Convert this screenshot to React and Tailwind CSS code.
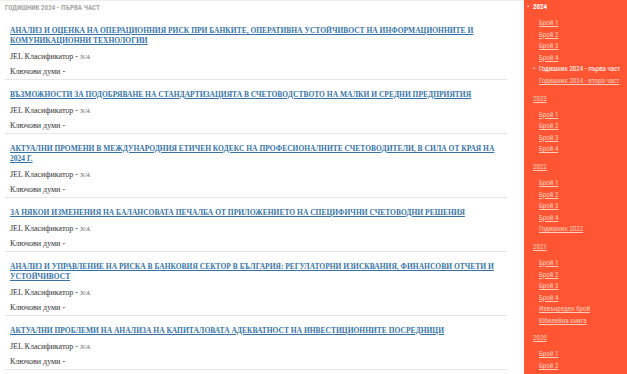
import React from "react";

const articles = [
  "АНАЛИЗ И ОЦЕНКА НА ОПЕРАЦИОННИЯ РИСК ПРИ БАНКИТЕ, ОПЕРАТИВНА УСТОЙЧИВОСТ НА ИНФОРМАЦИОННИТЕ И КОМУНИКАЦИОННИ ТЕХНОЛОГИИ",
  "ВЪЗМОЖНОСТИ ЗА ПОДОБРЯВАНЕ НА СТАНДАРТИЗАЦИЯТА В СЧЕТОВОДСТВОТО НА МАЛКИ И СРЕДНИ ПРЕДПРИЯТИЯ",
  "АКТУАЛНИ ПРОМЕНИ В МЕЖДУНАРОДНИЯ ЕТИЧЕН КОДЕКС НА ПРОФЕСИОНАЛНИТЕ СЧЕТОВОДИТЕЛИ, В СИЛА ОТ КРАЯ НА 2024 Г.",
  "ЗА НЯКОИ ИЗМЕНЕНИЯ НА БАЛАНСОВАТА ПЕЧАЛБА ОТ ПРИЛОЖЕНИЕТО НА СПЕЦИФИЧНИ СЧЕТОВОДНИ РЕШЕНИЯ",
  "АНАЛИЗ И УПРАВЛЕНИЕ НА РИСКА В БАНКОВИЯ СЕКТОР В БЪЛГАРИЯ: РЕГУЛАТОРНИ ИЗИСКВАНИЯ, ФИНАНСОВИ ОТЧЕТИ И УСТОЙЧИВОСТ",
  "АКТУАЛНИ ПРОБЛЕМИ НА АНАЛИЗА НА КАПИТАЛОВАТА АДЕКВАТНОСТ НА ИНВЕСТИЦИОННИТЕ ПОСРЕДНИЦИ",
];

const years = [
  {
    year: "2024",
    active: true,
    items: [
      { t: "Брой 1" },
      { t: "Брой 2" },
      { t: "Брой 3" },
      { t: "Брой 4" },
      { t: "Годишник 2024 - първа част", active: true },
      { t: "Годишник 2024 - втора част" },
    ],
  },
  { year: "2023", items: [{ t: "Брой 1" }, { t: "Брой 2" }, { t: "Брой 3" }, { t: "Брой 4" }] },
  {
    year: "2022",
    items: [{ t: "Брой 1" }, { t: "Брой 2" }, { t: "Брой 3" }, { t: "Брой 4" }, { t: "Годишник 2022" }],
  },
  {
    year: "2021",
    items: [
      { t: "Брой 1" },
      { t: "Брой 2" },
      { t: "Брой 3" },
      { t: "Брой 4" },
      { t: "Извънреден брой" },
      { t: "Юбилейна книга" },
    ],
  },
  { year: "2020", items: [{ t: "Брой 1" }, { t: "Брой 2" }, { t: "Брой 3" }, { t: "Брой 4" }] },
];

export default function App() {
  return (
    <div className="flex h-[374px] w-[627px] overflow-hidden bg-white">
      <main className="w-[524px] shrink-0 pl-[5px] border-t border-[#eeeeee]">
        <div className="pt-[1px] h-[13px] leading-[12px] text-[7px] font-bold uppercase text-[#a8a8a8] font-['Roboto_Condensed',sans-serif]">
          ГОДИШНИК 2024 - ПЪРВА ЧАСТ
        </div>
        {articles.map((a, i) => (
          <div
            key={i}
            className={`w-[502px] pl-[5px] border-b border-[#e6e6e6] font-['Liberation_Serif',serif] ${i === 0 ? "pt-[12px]" : "pt-[10px]"}`}
          >
            <a
              href="#"
              className="block pr-[10px] text-[7.5px] leading-[10px] font-bold text-[#3674a8] underline decoration-[#3674a8]"
            >
              {a}
            </a>
            <div className="mt-[4px] text-[8px] leading-[14px] text-[#333333]">
              JEL Класификатор - <span className="italic text-[6.5px] text-[#666666]">N/A</span>
            </div>
            <div className="mt-[1px] text-[8px] leading-[14px] text-[#333333]">Ключови думи -</div>
          </div>
        ))}
      </main>
      <aside className="flex-1 bg-[#ff5533] pl-[3px] pt-[1px] font-['Roboto_Condensed',sans-serif] whitespace-nowrap">
        {years.map((y) => (
          <div key={y.year}>
            <div className="flex items-center h-[12px] leading-[12px] text-[7px]">
              <span className={`w-[6px] text-white ${y.active ? "" : "invisible"}`}>•</span>
              <span className={y.active ? "font-bold text-white" : "text-[#ffcdbd] underline"}>{y.year}</span>
            </div>
            <div className="py-[5px] pl-[6px]">
              {y.items.map((it, j) => (
                <div key={j} className="flex items-center h-[11.6px] text-[7px] leading-[11.6px]">
                  <span className={`w-[6px] text-white ${it.active ? "" : "invisible"}`}>•</span>
                  <span className={it.active ? "text-white" : "text-[#ffcdbd] underline"}>{it.t}</span>
                </div>
              ))}
            </div>
          </div>
        ))}
      </aside>
    </div>
  );
}
